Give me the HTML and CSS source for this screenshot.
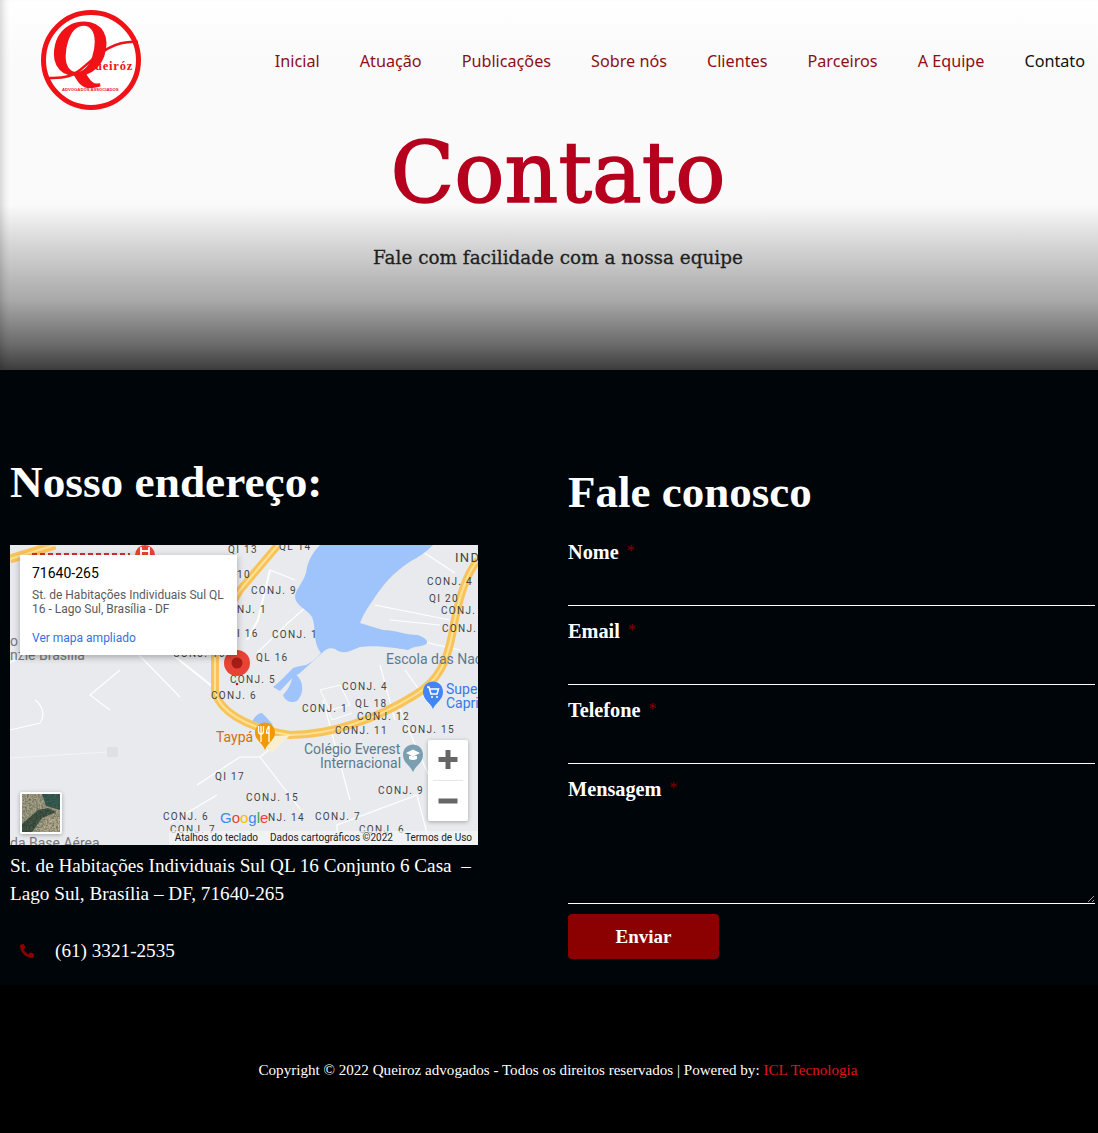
FILE: index.html
```html
<!DOCTYPE html>
<html lang="pt-BR">
<head>
    <meta charset="UTF-8" />
    <title>Contato - Queiroz advogados</title>
    <link rel="stylesheet" href="styles.css">
</head>
<body>
    <header class="hero">
        <div class="topbar">
            <svg class="logo" width="102" height="102" viewBox="0 0 102 102">
                <circle cx="51" cy="50" r="47.5" fill="#fff" stroke="#f01216" stroke-width="5"/>
                <path d="M7 68 C20 68 30 68 40 60 C55 48 70 30 98 32" fill="none" stroke="#f01216" stroke-width="2.500"/>
                <text x="11" y="65" class="logo-q">Q</text>
                <text x="55" y="60" class="logo-name">ueiróz</text>
                <text x="22" y="81" class="logo-sub">ADVOGADOS ASSOCIADOS</text>
            </svg>
            <nav class="nav">
                <a href="#">Inicial</a>
                <a href="#">Atuação</a>
                <a href="#">Publicações</a>
                <a href="#">Sobre nós</a>
                <a href="#">Clientes</a>
                <a href="#">Parceiros</a>
                <a href="#">A Equipe</a>
                <a href="#" class="active">Contato</a>
            </nav>
        </div>
        <h1>Contato</h1>
        <p class="tagline">Fale com facilidade com a nossa equipe</p>
    </header>

    <main class="content">
        <section class="address">
            <h2>Nosso endereço:</h2>
            <div class="map">
                <svg width="468" height="300" viewBox="0 0 468 300">
                    <defs>
                        <filter id="speckle" x="0" y="0" width="100%" height="100%">
                            <feTurbulence type="fractalNoise" baseFrequency="0.55" numOctaves="2" seed="4"/>
                            <feColorMatrix values="0 0 0 0 0.1  0 0 0 0 0.12  0 0 0 0 0.08  1.8 0 0 0 -0.6"/>
                        </filter>
                    </defs>
                    <rect width="468" height="300" fill="#e8eaed"/>
                    <!-- minor streets -->
                    <g fill="none" stroke="#fff" stroke-width="1.200">
                        <path d="M260 25 L248 75 L237 95" stroke-width="2"/>
                        <path d="M260 25 L285 35"/>
                        <path d="M247 108 L278 78 L296 62"/>
                        <path d="M127 108 L170 152"/>
                        <path d="M163 110 L203 142" stroke-width="2"/>
                        <path d="M110 125 L80 150 L100 165"/>
                        <path d="M0 118 L30 100"/>
                        <path d="M187 240 L230 212 L250 212 L273 193"/>
                        <path d="M160 278 L207 250"/>
                        <path d="M250 212 L293 268"/>
                        <path d="M313 155 L340 255"/>
                        <path d="M327 295 L327 280 L407 250 L420 300"/>
                        <path d="M0 185 L30 178 C36 170 32 160 25 155"/>
                        <path d="M370 120 L385 175"/>
                        <path d="M395 125 L420 160"/>
                        <path d="M365 60 L440 75"/>
                        <path d="M380 75 L430 80"/>
                        <path d="M410 5 L445 28"/>
                        <path d="M405 95 L450 105"/>
                        <path d="M388 160 L425 245"/>
                    </g>
                    <path d="M0 213 L97 207" fill="none" stroke="#f3f4f5" stroke-width="1"/>
                    <path d="M310 145 L330 140 L340 160 L320 165 Z M318 165 L322 175 L342 168" fill="none" stroke="#fff" stroke-width="1"/>
                    <rect x="97" y="202" width="11" height="10" fill="#dfe0e4"/>
                    <!-- lake -->
                    <path d="M310 0 C300 10 297 20 296 28 C292 40 285 45 285 52 C285 60 298 65 302 72 C305 80 304 85 305 92 C306 100 308 104 311 108 C305 115 300 118 296 120 C290 121 285 122 283 123 C278 128 272 135 263 142 L270 146 C276 140 282 132 290 128 L312 108 C316 104 320 102 325 104 C330 108 335 108 340 106 L350 102 C365 100 385 103 398 105 C405 100 415 102 417 98 C418 94 412 92 408 90 C395 90 385 85 373 85 L350 78 C355 65 360 60 365 52 C375 38 380 32 390 24 C400 15 412 12 423 0 Z" fill="#9fc4fb"/>
                    <path d="M283 128 C292 132 296 145 288 155 C282 160 274 155 273 150 C278 145 282 138 283 128 Z" fill="#9fc4fb"/>
                    <path d="M240 182 C243 172 248 168 252 168 C256 172 260 176 263 180 L250 182 Z" fill="#9fc4fb"/>
                    <!-- highways -->
                    <g fill="none">
                        <path d="M0 14 L45 0" stroke="#f9c35c" stroke-width="9"/>
                        <path d="M0 14 L45 0" stroke="#fde293" stroke-width="2"/>
                        <path d="M268 0 L230 45 L215 70" stroke="#f9c35c" stroke-width="8"/>
                        <path d="M268 0 L230 45 L215 70" stroke="#fde293" stroke-width="2"/>
                        <path d="M205 95 L205 145 C208 165 235 183 280 190 C320 190 365 175 405 150 C430 135 437 115 442 90 C447 60 455 30 468 15" stroke="#f9c35c" stroke-width="8"/>
                        <path d="M205 95 L205 145 C208 165 235 183 280 190 C320 190 365 175 405 150 C430 135 437 115 442 90 C447 60 455 30 468 15" stroke="#fde293" stroke-width="2"/>
                    </g>
                    <path d="M255 192 L280 190 L262 208 L252 200 Z" fill="#f8efd2"/>
                    <!-- hospital marker above the popup -->
                    <circle cx="135" cy="10" r="10" fill="#ea4335"/>
                    <path d="M131 2 v8 M139 2 v8 M131 6 h8" fill="none" stroke="#fff" stroke-width="1.800"/>
                    <path d="M22 9 H120" fill="none" stroke="#d93025" stroke-width="2" stroke-dasharray="5 3"/>
                    <!-- labels -->
                    <g class="map-label">
                        <text x="218" y="8">QI 13</text>
                        <text x="269" y="5">QL 14</text>
                        <text x="227" y="33">10</text>
                        <text x="241" y="49">CONJ. 9</text>
                        <text x="227" y="68">NJ. 1</text>
                        <text x="227" y="92">I 16</text>
                        <text x="262" y="93">CONJ. 1</text>
                        <text x="163" y="112">CONJ. 10</text>
                        <text x="246" y="116">QL 16</text>
                        <text x="220" y="138">CONJ. 5</text>
                        <text x="201" y="154">CONJ. 6</text>
                        <text x="332" y="145">CONJ. 4</text>
                        <text x="292" y="167">CONJ. 1</text>
                        <text x="345" y="162">QL 18</text>
                        <text x="347" y="175">CONJ. 12</text>
                        <text x="325" y="189">CONJ. 11</text>
                        <text x="392" y="188">CONJ. 15</text>
                        <text x="368" y="249">CONJ. 9</text>
                        <text x="205" y="235">QI 17</text>
                        <text x="236" y="256">CONJ. 15</text>
                        <text x="153" y="275">CONJ. 6</text>
                        <text x="160" y="288">CONJ. 7</text>
                        <text x="258" y="276">NJ. 14</text>
                        <text x="305" y="275">CONJ. 7</text>
                        <text x="349" y="288">CONJ. 6</text>
                        <text x="417" y="40">CONJ. 4</text>
                        <text x="419" y="57">QI 20</text>
                        <text x="431" y="69">CONJ.</text>
                        <text x="432" y="87">CONJ.</text>
                        <text x="445" y="17" class="map-ind">IND</text>
                    </g>
                    <text x="376" y="119" class="map-place">Escola das Nac</text>
                    <text x="294" y="209" class="map-place">Colégio Everest</text>
                    <text x="310" y="223" class="map-place">Internacional</text>
                    <text x="0" y="101" class="map-place faint">o</text>
                    <text x="0" y="115" class="map-place faint">nzie Brasília</text>
                    <text x="0" y="303" class="map-place faint">da Base Aérea</text>
                    <text x="206" y="197" class="map-food">Taypá</text>
                    <text x="436" y="149" class="map-shop">Super</text>
                    <text x="436" y="163" class="map-shop">Capri</text>
                    <!-- pins -->
                    <circle cx="227" cy="118" r="13" fill="#ea4335"/>
                    <circle cx="227" cy="118" r="5.500" fill="#a51d14"/>
                    <circle cx="227" cy="139" r="1.300" fill="#c5221f"/>
                    <path d="M245 188 C245 174 265 174 265 188 C265 195 258 197 255 205 C252 197 245 195 245 188 Z" fill="#f29900"/>
                    <path d="M251 181 v16 M248.500 181 v5 q0 3 2.500 3 q2.500 0 2.500 -3 v-5 M259 181 v16 M259 181 q-2.500 3 -2.500 7 h2.500" fill="none" stroke="#fff" stroke-width="1.300"/>
                    <path d="M413 147 C413 133 433 133 433 147 C433 155 426 157 423 164 C420 157 413 155 413 147 Z" fill="#4285f4"/>
                    <path d="M417 142 h2 l2 7 h6 l1.500 -5 h-8.500" fill="none" stroke="#fff" stroke-width="1.500"/>
                    <circle cx="422" cy="152" r="1" fill="#fff"/><circle cx="427" cy="152" r="1" fill="#fff"/>
                    <path d="M393 210 C393 196 413 196 413 210 C413 218 406 220 403 227 C400 220 393 218 393 210 Z" fill="#7b9eb0"/>
                    <path d="M396 208 l7 -3.500 l7 3.500 l-7 3.500 Z M399 211 v3 q4 2 8 0 v-3" fill="#fff"/>
                    <!-- google -->
                    <text x="210" y="278" class="g-logo"><tspan fill="#4285f4">G</tspan><tspan fill="#ea4335">o</tspan><tspan fill="#fbbc04">o</tspan><tspan fill="#4285f4">g</tspan><tspan fill="#34a853">l</tspan><tspan fill="#ea4335">e</tspan></text>
                </svg>
                <div class="map-popup">
                    <strong>71640-265</strong>
                    <p>St. de Habitações Individuais Sul QL 16 - Lago Sul, Brasília - DF</p>
                    <a href="#">Ver mapa ampliado</a>
                </div>
                <div class="zoom-ctrl">
                    <svg width="40" height="40" viewBox="0 0 40 40"><path d="M20 10 v19 M10.500 19.500 h19" stroke="#666" stroke-width="5"/></svg>
                    <div class="zoom-sep"></div>
                    <svg width="40" height="40" viewBox="0 0 40 40"><path d="M10.500 20 h19" stroke="#666" stroke-width="5"/></svg>
                </div>
                <div class="sat-thumb">
                    <svg width="38" height="38" viewBox="0 0 38 38">
                        <rect width="38" height="38" fill="#a9a287"/>
                        <path d="M20 0 h18 v16 L24 12 Z" fill="#24504a"/>
                        <path d="M0 30 L16 16 L26 14 L34 18 L20 24 L10 38 H0 Z" fill="#2e4436"/>
                        <path d="M18 38 L24 26 L38 22 V38 Z" fill="#bcae92"/>
                        <rect width="38" height="38" filter="url(#speckle)"/>
                    </svg>
                </div>
                <div class="map-attrib">
                    <span>Atalhos do teclado</span>
                    <span>Dados cartográficos ©2022</span>
                    <span>Termos de Uso</span>
                </div>
            </div>
            <p class="street">St. de Habitações Individuais Sul QL 16 Conjunto 6 Casa &nbsp;– Lago Sul, Brasília – DF, 71640-265</p>
            <p class="phone">
                <svg width="14" height="14" viewBox="0 0 512 512"><path fill="#8b0000" d="M497 361l-112-48a24 24 0 0 0-28 7l-50 61a371 371 0 0 1-177-177l61-50a24 24 0 0 0 7-28L150 14a24 24 0 0 0-28-14L18 24A24 24 0 0 0 0 48c0 257 208 464 464 464a24 24 0 0 0 24-19l24-104a24 24 0 0 0-15-28z"/></svg>
                <span>(61) 3321-2535</span>
            </p>
        </section>

        <section class="contact">
            <h2>Fale conosco</h2>
            <form class="contact-form">
                <label class="field">
                    <span class="field-label">Nome <i>*</i></span>
                    <input type="text" />
                </label>
                <label class="field">
                    <span class="field-label">Email <i>*</i></span>
                    <input type="email" />
                </label>
                <label class="field">
                    <span class="field-label">Telefone <i>*</i></span>
                    <input type="text" />
                </label>
                <label class="field">
                    <span class="field-label">Mensagem <i>*</i></span>
                    <textarea></textarea>
                </label>
                <button type="button">Enviar</button>
            </form>
        </section>
    </main>

    <footer class="footer">
        Copyright © 2022 Queiroz advogados - Todos os direitos reservados | Powered by: <a href="#">ICL Tecnologia</a>
    </footer>
</body>
</html>
```

FILE: styles.css
```css
* { box-sizing: border-box; }
body { margin: 0; background: #000; color: #fff; font-family: "Liberation Serif", serif; }

.hero {
    height: 370px;
    background: linear-gradient(#fff 0, #fafafa 60px, #fafafa 205px, #d5d5d5 245px, #a9a9a9 300px, #6a6a6a 345px, #3c3c3c 370px);
    box-shadow: inset 8px 0 8px -6px rgba(0,0,0,.2);
    text-align: center;
}
.topbar { display: flex; justify-content: space-between; padding: 10px 13px 0 40px; }
.logo { display: block; }
.logo-q { font: italic bold 80px "Liberation Serif", serif; fill: #f01216; }
.logo-name { font: bold 12.500px "Liberation Serif", serif; fill: #f01216; letter-spacing: .8px; }
.logo-sub { font: bold 4.200px "Liberation Sans", sans-serif; fill: #f01216; }
.nav { display: flex; gap: 40px; padding-top: 41px; font: 16.200px "Noto Sans", sans-serif; }
.nav a { color: #8b0f14; text-decoration: none; line-height: 20px; }
.nav a.active { color: #111; }
.hero h1 {
    margin: 16px 0 0; padding-left: 18px;
    font: 400 83.500px/90px "DejaVu Serif", serif; color: #b5001e;
    -webkit-text-stroke: 1.500px #b5001e;
}
.tagline {
    margin: 28px 0 0; padding-left: 18px;
    font: 18.400px/24px "DejaVu Serif", serif; color: #1f1f1f;
    -webkit-text-stroke: .3px #1f1f1f;
}

.content {
    height: 615px;
    background: #00050a;
    display: flex;
    padding: 0 3px 0 10px;
}
.address { width: 468px; margin-right: 90px; }
.address h2 { margin: 88px 0 39px; font: 700 45.300px/48px "Liberation Serif", serif; }
.contact { flex: 1; }
.contact h2 { margin: 98px 0 24px; font: 700 45px/48px "Liberation Serif", serif; }

.map { position: relative; width: 468px; height: 300px; overflow: hidden; font-family: Roboto, sans-serif; }
.map > svg { display: block; }
.map-label { font: 400 10px Roboto, sans-serif; letter-spacing: 1.300px; fill: #444; }
.map-ind { font-size: 13px; }
.map-place { font: 14px Roboto, sans-serif; fill: #5b7a8c; }
.map-place.faint { fill: #777; }
.map-food { font: 14px Roboto, sans-serif; fill: #d56e0c; }
.map-shop { font: 14px Roboto, sans-serif; fill: #3b78e7; }
.g-logo { font: 15px "Liberation Sans", sans-serif; }
.map-popup {
    position: absolute; left: 10px; top: 10px; width: 217px; height: 100px;
    background: #fff; padding: 9px 12px;
    box-shadow: 0 2px 7px rgba(0,0,0,.3);
}
.map-popup strong { display: block; font: 400 14px/18px Roboto, sans-serif; color: #000; }
.map-popup p { margin: 6px 0 0; font: 12px/14px Roboto, sans-serif; color: #5b5b5b; }
.map-popup a { display: block; margin-top: 15px; font: 12px/15px Roboto, sans-serif; color: #3a6fe0; text-decoration: none; }
.zoom-ctrl {
    position: absolute; left: 418px; top: 195px; width: 40px; height: 81px;
    background: #fff; border-radius: 2px; box-shadow: 0 1px 4px rgba(0,0,0,.3);
}
.zoom-ctrl svg { display: block; }
.zoom-sep { height: 1px; margin: 0 5px; background: #e6e6e6; }
.sat-thumb {
    position: absolute; left: 10px; top: 247px; width: 42px; height: 42px;
    border: 2px solid #fff; border-radius: 2px; box-shadow: 0 1px 4px rgba(0,0,0,.3);
}
.sat-thumb svg { display: block; }
.map-attrib {
    position: absolute; right: 0; bottom: 0; height: 14px; display: flex; gap: 12px;
    padding: 0 6px; background: rgba(245,245,245,.7);
    font: 10px/14px Roboto, sans-serif; color: #222;
}

.street { margin: 7px 0 0; font: 19.200px/28px "Liberation Serif", serif; }
.phone { margin: 29px 0 0 10px; display: flex; align-items: center; gap: 21px; font: 19.200px/28px "Liberation Serif", serif; }

.field { display: block; margin-bottom: 13px; }
.field-label { display: block; font: 700 20.300px/24px "Liberation Serif", serif; }
.field-label i { margin-left: 3px; font: 16px "Liberation Serif", serif; color: #8b0000; vertical-align: 3px; }
.field input, .field textarea {
    display: block; width: 100%; padding: 4px 0; background: transparent; color: #fff;
    border: 0; border-bottom: 1px solid #fff; outline: 0;
}
.field input { height: 42px; }
.field textarea { height: 103px; font: inherit; resize: vertical; }
.contact-form button {
    display: block; width: 151px; height: 45px; border: 0; border-radius: 4px;
    background: #8b0000; color: #fff; font: 700 19px "Liberation Serif", serif;
}
.field:nth-child(4) { margin-bottom: 10px; }

.footer { height: 148px; padding: 75px 0 0 18px; text-align: center; font: 15.100px/20px "Liberation Serif", serif; }
.footer a { color: #e0141b; text-decoration: none; }
```
